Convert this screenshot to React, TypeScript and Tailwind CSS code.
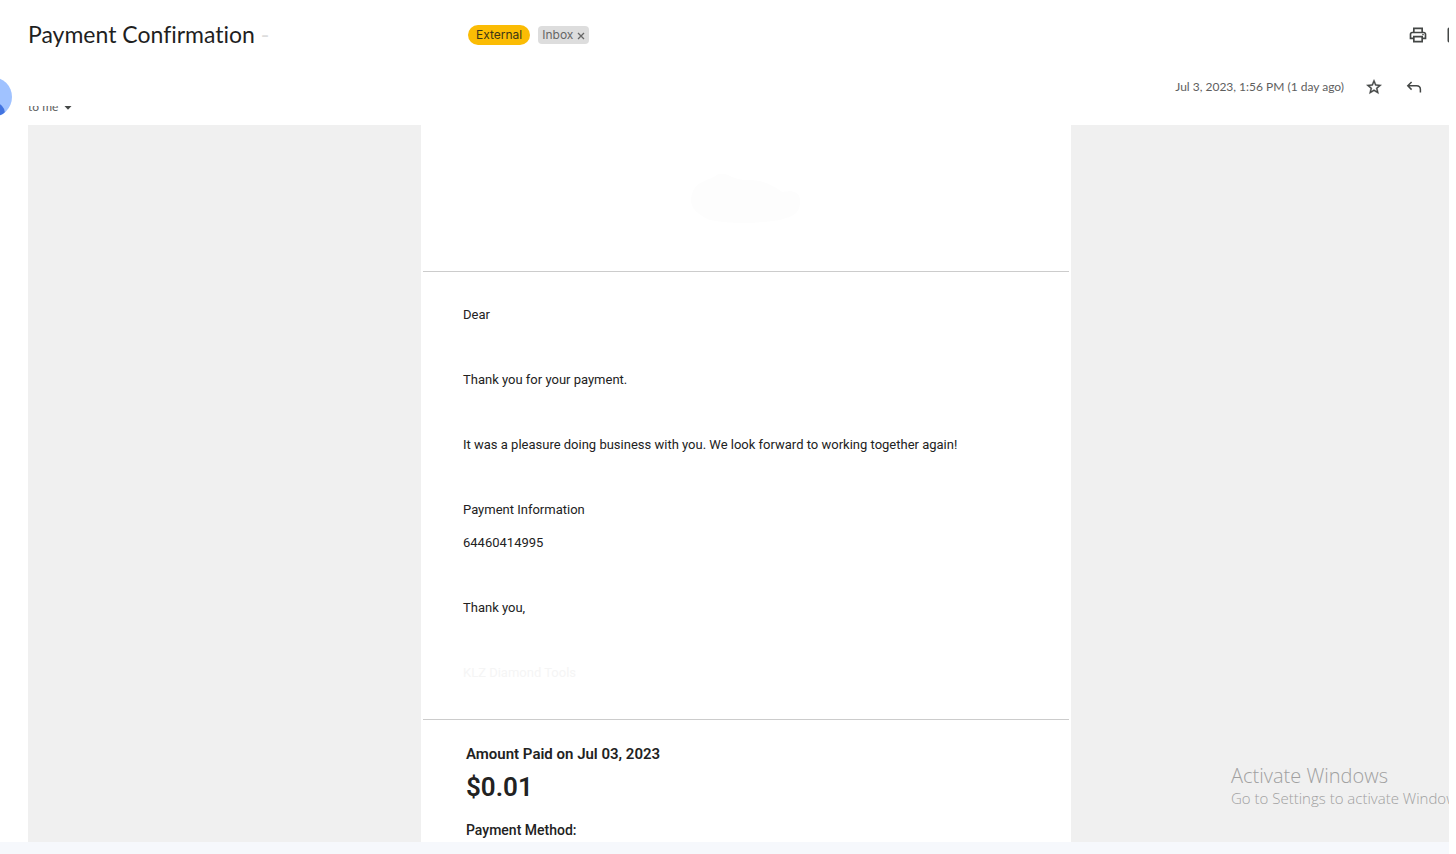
import React from "react";

const iconButton = "flex size-5 shrink-0 items-center justify-center text-[#444746]";

function PrintIcon() {
  return (
    <svg viewBox="0 0 24 24" className="size-5" fill="currentColor" aria-hidden="true">
      <path d="M19 8h-1V3H6v5H5c-1.66 0-3 1.34-3 3v6h4v4h12v-4h4v-6c0-1.66-1.34-3-3-3zM8 5h8v3H8V5zm8 12v2H8v-4h8v2zm2-2v-2H6v2H4v-4c0-.55.45-1 1-1h14c.55 0 1 .45 1 1v4h-2z" />
      <circle cx="18" cy="11.5" r="1" />
    </svg>
  );
}

function NewWindowIcon() {
  return (
    <svg viewBox="0 0 24 24" className="size-5 shrink-0" fill="currentColor" aria-hidden="true">
      <path d="M19 19H5V5h7V3H5a2 2 0 0 0-2 2v14a2 2 0 0 0 2 2h14c1.1 0 2-.9 2-2v-7h-2v7zM14 3v2h3.59l-9.83 9.83 1.41 1.41L19 6.41V10h2V3h-7z" />
    </svg>
  );
}

function StarIcon() {
  return (
    <svg viewBox="0 0 24 24" className="size-[18px]" fill="currentColor" stroke="currentColor" strokeWidth="0.5" aria-hidden="true">
      <path d="m22 9.24-7.19-.62L12 2 9.19 8.63 2 9.24l5.46 4.73L5.82 21 12 17.27 18.18 21l-1.63-7.03L22 9.24zM12 15.4l-3.76 2.27 1-4.28-3.32-2.88 4.38-.38L12 6.1l1.71 4.04 4.38.38-3.32 2.88 1 4.28L12 15.4z" />
    </svg>
  );
}

function ReplyIcon() {
  return (
    <svg viewBox="0 0 20 20" className="size-5" fill="none" stroke="currentColor" strokeWidth="1.5" aria-hidden="true">
      <path d="M7.6 5 3.8 8.8l3.8 3.8M4 8.8h8.6c2.3 0 3.8 1.5 3.8 3.8v3" />
    </svg>
  );
}

function Header() {
  return (
    <header className="flex h-[70px] items-center pl-7">
      <h1 className="w-[440px] shrink-0 pb-0.5 font-[Lato,sans-serif] text-[23px] leading-7 text-[#1f1f1f] [font-variant-ligatures:none]">
        Payment Confirmation <span className="text-[#dddddd]">-</span>
      </h1>
      <span className="flex h-5 items-center rounded-full bg-[#fbbc04] px-2 font-[Inter,sans-serif] text-xs text-[#3c3516]">External</span>
      <span className="ml-2 flex h-[18px] items-center gap-1 rounded bg-[#dddddd] px-1 font-[Inter,sans-serif] text-xs text-[#666666]">
        Inbox
        <button type="button" aria-label="Remove label Inbox" className="flex size-2 items-center justify-center">
          <svg viewBox="0 0 8 8" className="mt-0.5 size-2" stroke="currentColor" strokeWidth="1.3" aria-hidden="true">
            <path d="m1 1 6 6M7 1 1 7" />
          </svg>
        </button>
      </span>
      <div className="ml-auto flex w-[41px] gap-[17px] overflow-hidden">
        <button type="button" aria-label="Print all" className={iconButton}>
          <PrintIcon />
        </button>
        <button type="button" aria-label="In new window" className={iconButton}>
          <NewWindowIcon />
        </button>
      </div>
    </header>
  );
}

function Sender() {
  return (
    <div className="flex h-[55px]">
      <div className="flex w-7 shrink-0 justify-start overflow-hidden pt-[7px]">
        <svg viewBox="0 0 12 40" className="h-10 w-3" aria-hidden="true">
          <clipPath id="avatar">
            <circle cx="-8" cy="20" r="20" />
          </clipPath>
          <g clipPath="url(#avatar)">
            <path fill="#a0c2ff" d="M0 0h12v40H0z" />
            <circle cx="-5" cy="36" r="10" fill="#4374e0" />
          </g>
        </svg>
      </div>
      <button type="button" aria-label="Show details" className="relative mt-[29px] flex h-4 items-center gap-1.5 self-start text-xs leading-4 text-[#5e5e5e]">
        <span>to me</span>
        <svg viewBox="0 0 8 8" className="mt-0.5 size-2" fill="#444746" aria-hidden="true">
          <path d="M.5 2h7L4 5.8z" />
        </svg>
        <span className="absolute inset-x-0 top-0 h-[7px] bg-white" />
      </button>
      <div className="mr-[25px] ml-auto flex h-[34px] items-center">
        <time dateTime="2023-07-03T13:56" className="text-xs text-[#5e5e5e]">Jul 3, 2023, 1:56 PM (1 day ago)</time>
        <button type="button" aria-label="Star" className={`${iconButton} ml-5`}>
          <StarIcon />
        </button>
        <button type="button" aria-label="Reply" className={`${iconButton} ml-5`}>
          <ReplyIcon />
        </button>
      </div>
    </div>
  );
}

function Letter() {
  return (
    <article className="w-[650px] shrink-0 overflow-hidden bg-white px-0.5 font-[Roboto,sans-serif] text-[#222222]">
      <div className="flex h-[146px] items-center justify-center">
        <svg viewBox="0 0 112 52" className="h-13 w-28" fill="#fdfdfd" aria-hidden="true">
          <path d="M2 22C6 8 22 8 28 2c12-2 12 6 30 6 16 0 26 6 34 12 10-2 18 0 18 8 0 14-6 16-20 20-24 4-50 4-70 0C6 42-2 34 2 22z" />
        </svg>
      </div>
      <div className="flex flex-col gap-[45px] border-y border-[#cccccc] px-10 pt-[33px] pb-9 text-[13px] leading-5">
        <p>Dear</p>
        <p>Thank you for your payment.</p>
        <p>It was a pleasure doing business with you. We look forward to working together again!</p>
        <div className="flex flex-col gap-[13px]">
          <p>Payment Information</p>
          <p>64460414995</p>
        </div>
        <p>Thank you,</p>
        <p className="text-[#f5f5f5]">KLZ Diamond Tools</p>
      </div>
      <div className="px-[43px] pt-6">
        <p className="text-[15px] leading-5 font-semibold">Amount Paid on Jul 03, 2023</p>
        <p className="mt-[7px] text-[26px] leading-8 font-semibold">$0.01</p>
        <p className="mt-[17px] text-sm leading-5 font-medium">Payment Method:</p>
      </div>
    </article>
  );
}

export default function App() {
  return (
    <div className="flex h-screen flex-col overflow-hidden bg-white pr-[7px] font-[Lato,sans-serif]">
      <Header />
      <Sender />
      <main className="relative ml-7 flex min-h-0 flex-1 justify-center overflow-hidden bg-[#f0f0f0] pl-[15px]">
        <Letter />
        <aside className="absolute right-0 bottom-[34px] w-[218px] font-['Open_Sans',sans-serif] font-light whitespace-nowrap text-[#a0a0a0]">
          <p className="text-xl leading-6">Activate Windows</p>
          <p className="text-[15px] leading-5">Go to Settings to activate Windows.</p>
        </aside>
      </main>
      <footer className="h-3 shrink-0 bg-[#f6f8fc]" />
    </div>
  );
}
